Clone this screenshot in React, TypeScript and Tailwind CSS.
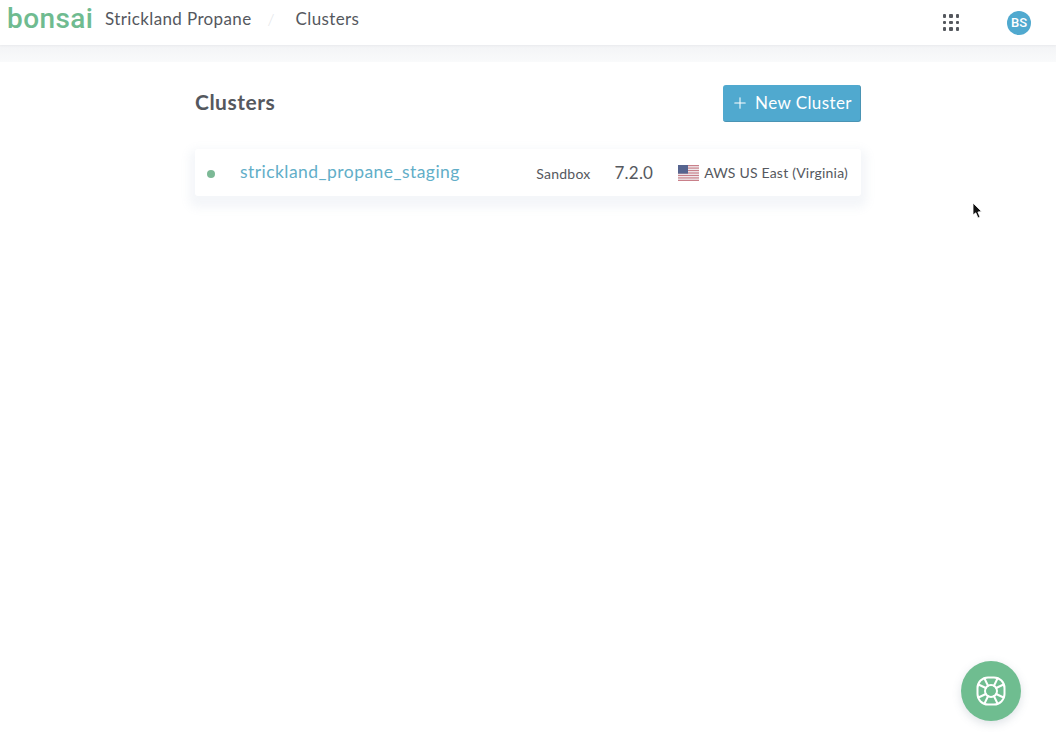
import { Plus } from "lucide-react";

function UsFlag() {
  const stripes = [0, 2, 4, 6, 8, 10, 12];
  return (
    <svg width="21" height="16" viewBox="0 0 21 13" preserveAspectRatio="none" className="shrink-0">
      <rect width="21" height="13" fill="#f2f2f5" />
      {stripes.map((y) => (
        <rect key={y} y={y} width="21" height="1" fill="#c9808a" />
      ))}
      <rect width="10" height="7" fill="#56648f" />
    </svg>
  );
}

function AppsGrid() {
  return (
    <div className="grid grid-cols-3 gap-[3px]">
      {Array.from({ length: 9 }).map((_, i) => (
        <span key={i} className="w-[3.5px] h-[3.5px] bg-[#55585e] rounded-[1px]" />
      ))}
    </div>
  );
}

function LifeRing() {
  return (
    <svg width="32" height="32" viewBox="0 0 32 32" fill="none" stroke="white" strokeWidth="2" strokeLinecap="round">
      <rect x="2.5" y="2.5" width="27" height="27" rx="10.5" />
      <circle cx="16" cy="16" r="6" />
      <path d="M9.5 3.5 L13 10.8 M3.5 9.5 L10.8 13" />
      <path d="M22.5 3.5 L19 10.8 M28.5 9.5 L21.2 13" />
      <path d="M9.5 28.5 L13 21.2 M3.5 22.5 L10.8 19" />
      <path d="M22.5 28.5 L19 21.2 M28.5 22.5 L21.2 19" />
    </svg>
  );
}

function Cursor() {
  return (
    <svg width="12" height="18" viewBox="0 0 12 18" className="absolute left-[972px] top-[202px]">
      <path d="M1 1 L1 13 L3.8 10.8 L6 16 L8 15 L5.9 10 L9.6 9.6 Z" fill="#111" stroke="white" strokeWidth="0.8" />
    </svg>
  );
}

export default function App() {
  return (
    <div className="relative min-h-[732px] bg-white text-[#55585e] font-['Lato','Open_Sans',sans-serif] overflow-hidden">
      <header className="h-[45px] bg-white flex items-center pl-[7px] pr-[25px] pb-[7px] shadow-[0_1px_2px_rgba(80,90,110,0.06)] relative">
        <span className="text-[28px] leading-none font-['Roboto',sans-serif] font-medium text-[#6fbb90] tracking-[0.4px] w-[98px]">
          bonsai
        </span>
        <span className="text-[17px] tracking-[0.38px]">Strickland Propane</span>
        <span className="ml-[16px] text-[16px] text-[#e2e4e8] font-light">/</span>
        <span className="ml-[21px] text-[17px] tracking-[0.38px]">Clusters</span>
        <div className="ml-auto flex items-center gap-[48px] mt-[7px]">
          <AppsGrid />
          <div className="w-[24px] h-[24px] rounded-full bg-[#50a9cf] text-white text-[13px] font-['Roboto',sans-serif] font-medium flex items-center justify-center">
            BS
          </div>
        </div>
      </header>
      <div className="h-[17px] bg-gradient-to-b from-[#f3f4f6] to-[#f9fafb]" />

      <main className="w-[666px] ml-[195px]">
        <div className="flex items-center justify-between mt-[23px]">
          <h1 className="text-[21px] font-bold tracking-[0.5px] mb-[3px]">Clusters</h1>
          <button className="h-[37px] w-[138px] bg-[#50a9cf] rounded-[3px] border-r border-b border-[#4a94b4] text-white text-[17px] tracking-[0.4px] flex items-center justify-center gap-[6px]">
            <Plus size={18} strokeWidth={1.4} />
            New Cluster
          </button>
        </div>

        <div className="mt-[27px] h-[47px] bg-white rounded-[3px] flex items-center pl-[12px] pr-[13px] shadow-[0_6px_10px_6px_rgba(130,160,190,0.09)]">
          <span className="w-[8px] h-[8px] rounded-full bg-[#7cb996] mt-[3px]" />
          <span className="ml-[25px] text-[17.5px] text-[#62aec8] tracking-[0.45px]">strickland_propane_staging</span>
          <span className="ml-auto text-[14px] tracking-[0.25px] mt-[2px]">Sandbox</span>
          <span className="ml-[24px] text-[17px] tracking-[0.2px]">7.2.0</span>
          <span className="ml-[25px] flex items-center gap-[5px] text-[14px] tracking-[0.2px]">
            <UsFlag />
            AWS US East (Virginia)
          </span>
        </div>
      </main>

      <Cursor />

      <button className="absolute left-[961px] top-[661px] w-[60px] h-[60px] rounded-full bg-[#6fbd90] flex items-center justify-center shadow-[0_3px_10px_rgba(90,110,130,0.2)]">
        <LifeRing />
      </button>
    </div>
  );
}
